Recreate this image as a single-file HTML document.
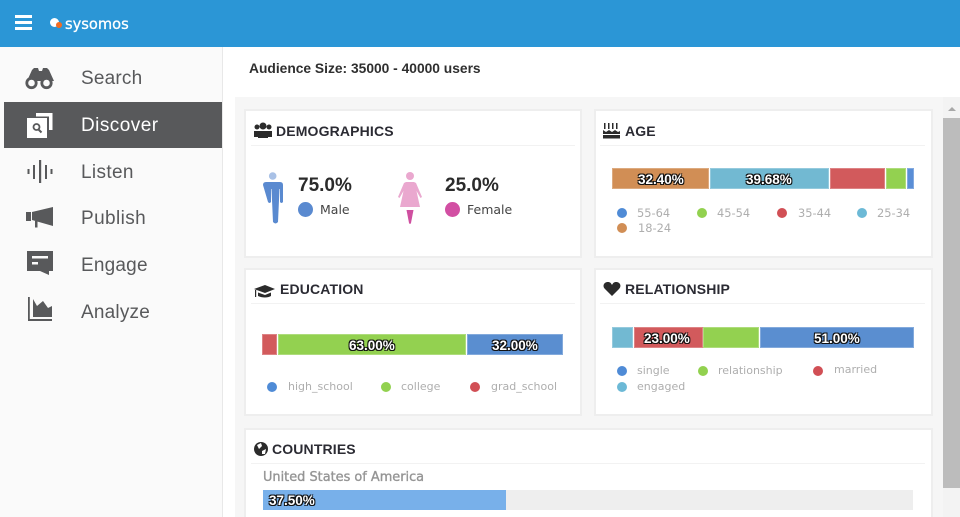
<!DOCTYPE html>
<html><head><meta charset="utf-8"><style>
*{box-sizing:border-box}
html,body{margin:0;padding:0;width:960px;height:517px;overflow:hidden;background:#fff;font-family:"Liberation Sans",sans-serif}
#w{position:relative;width:960px;height:517px;overflow:hidden;background:#fff}
.a{position:absolute}
.nav{position:absolute;left:81px;font-size:19px;color:#58595b;line-height:24px;white-space:nowrap;letter-spacing:.2px}
.card{position:absolute;background:#fff;border:2px solid #eeeeee}
.t{position:absolute;font-weight:bold;font-size:14px;color:#2b2b33;line-height:18px;white-space:nowrap;letter-spacing:.15px}
.hr{position:absolute;height:1px;background:#f2f2f2}
.seg{position:absolute;height:21px;border:1px solid rgba(255,255,255,.25)}
.pct{position:absolute;font-weight:bold;font-size:13.5px;color:#fff;line-height:21px;white-space:nowrap;text-shadow:1px 1px 0 #111,-1px -1px 0 #111,1px -1px 0 #111,-1px 1px 0 #111}
.dot{position:absolute;width:10px;height:10px;border-radius:50%}
.lg{position:absolute;font-family:"DejaVu Sans",sans-serif;font-size:11px;color:#aeaeae;line-height:16px;white-space:nowrap}
.ag{font-size:11.4px}
</style></head><body><div id="w">
<div class="a" style="left:0;top:0;width:960px;height:47px;background:#2b96d6"></div>
<div class="a" style="left:15px;top:15px;width:17px;height:3px;background:#fff"></div>
<div class="a" style="left:15px;top:21px;width:17px;height:3px;background:#fff"></div>
<div class="a" style="left:15px;top:27px;width:17px;height:3px;background:#fff"></div>
<div class="a" style="left:50px;top:18px;width:9px;height:9px;border-radius:50%;background:#fff"></div>
<div class="a" style="left:56px;top:22px;width:6px;height:6px;border-radius:50%;background:#f26b21"></div>
<div class="a" style="left:65px;top:14px;color:#fff;font-size:15.5px;line-height:20px;font-family:'DejaVu Sans',sans-serif;transform-origin:0 0;transform:scaleX(.945);-webkit-text-stroke:.3px #fff">sysomos</div>

<div class="a" style="left:0;top:47px;width:223px;height:470px;background:#fafafa;border-right:1px solid #e8e8e8"></div>
<div class="a" style="left:4px;top:102px;width:218px;height:46px;background:#58595b"></div>

<svg class="a" style="left:0;top:47px" width="80" height="290" viewBox="0 47 80 290">
<g fill="#58595b">
<path d="M27 81l5-11 2-2h4l1 3h3l1-3h4l2 2 5 11z"/>
<circle cx="31.500" cy="83" r="4.700" fill="#fafafa" stroke="#58595b" stroke-width="2.800"/>
<circle cx="46.500" cy="83" r="4.700" fill="#fafafa" stroke="#58595b" stroke-width="2.800"/>
</g>
<path d="M36 113h16.500v17H49v-13.500H36z" fill="#fff"/>
<rect x="27" y="118" width="20" height="20" fill="#fff"/>
<circle cx="36.500" cy="127" r="3" fill="none" stroke="#58595b" stroke-width="1.800"/>
<path d="M38.500 129.500l3 3" stroke="#58595b" stroke-width="2"/>
<g fill="#58595b">
<rect x="27.500" y="169" width="2" height="5"/><rect x="33" y="165" width="2" height="14"/><rect x="39" y="160" width="2.200" height="23"/><rect x="45" y="165" width="2" height="14"/><rect x="50.500" y="169" width="2" height="5"/>
<rect x="26" y="212" width="5" height="9"/>
<path d="M32 212l21-5v19l-21-6z"/><path d="M35 221h2.500v6.500H35z"/>
<path d="M27 251h26v20h-4v4l-9-4H27z"/>
<rect x="32" y="256" width="16" height="2.500" fill="#fafafa"/><rect x="32" y="262" width="6" height="2.500" fill="#fafafa"/>
<path d="M28 297h1.800v22H52v2H28z"/>
<path d="M33 317V299l4 7 6-5 5 7 4-2v11z"/>
</g>
</svg>

<div class="nav" style="top:67px">Search</div>
<div class="nav" style="top:114px;color:#fff;letter-spacing:.45px">Discover</div>
<div class="nav" style="top:161px;letter-spacing:.35px">Listen</div>
<div class="nav" style="top:207px;letter-spacing:.4px">Publish</div>
<div class="nav" style="top:254px">Engage</div>
<div class="nav" style="top:301px">Analyze</div>

<div class="t" style="left:249px;top:60px;font-size:13.8px;color:#2f2f2f;letter-spacing:0">Audience Size: 35000 - 40000 users</div>
<div class="a" style="left:235px;top:97px;width:725px;height:420px;background:#f6f6f6"></div>
<div class="a" style="left:943px;top:97px;width:17px;height:420px;background:#f3f3f3"></div>
<div class="a" style="left:948px;top:107px;width:0;height:0;border-left:4px solid transparent;border-right:4px solid transparent;border-bottom:4px solid #a8a8a8"></div>
<div class="a" style="left:943px;top:118px;width:17px;height:370px;background:#bcbcbc"></div>

<div class="card" style="left:244px;top:109px;width:338px;height:149px"></div>
<div class="card" style="left:594px;top:109px;width:339px;height:149px"></div>
<div class="card" style="left:244px;top:268px;width:338px;height:148px"></div>
<div class="card" style="left:594px;top:268px;width:339px;height:148px"></div>
<div class="card" style="left:244px;top:428px;width:689px;height:110px"></div>

<div class="hr" style="left:251px;top:145px;width:324px"></div>
<div class="hr" style="left:600px;top:145px;width:325px"></div>
<div class="hr" style="left:251px;top:303px;width:324px"></div>
<div class="hr" style="left:600px;top:303px;width:325px"></div>
<div class="hr" style="left:251px;top:463px;width:674px"></div>

<svg class="a" style="left:245px;top:110px" width="690" height="370" viewBox="245 110 690 370">
<g fill="#2b2b2b">
<circle cx="263" cy="126" r="3.500"/><circle cx="257" cy="127" r="2.500"/><circle cx="269" cy="127" r="2.500"/>
<path d="M254 131h5v6h-5zM267 131h5v6h-5z"/><path d="M258 131h10v7h-10z"/>
<rect x="604" y="123" width="1.500" height="6"/><rect x="608" y="123" width="1.500" height="6"/><rect x="612" y="123" width="1.500" height="6"/><rect x="616" y="123" width="1.500" height="6"/>
<path d="M603 130l3 2 3-2 3 2 3-2 3 2 2-1v3h-17v-3z"/><rect x="603" y="135" width="17" height="3.500"/>
<path d="M254 289l11-4 10 4-10 4z"/><path d="M258 292.500l7 2.500 6-2.500v3.500c-3 2-9 2-13 0z"/><rect x="255" y="290" width="1.200" height="7"/>
<path d="M612 296l-7-7c-3-3-1-7 3-7 2 0 3 1 4 3 1-2 2-3 4-3 4 0 6 4 3 7z"/>
</g>
<circle cx="261" cy="449" r="7" fill="#2b2b2b"/>
<path d="M257 445l4-2 1 3-3 3zM262 451l4-2-1 5-3 0z" fill="#fff"/>
<!-- male -->
<circle cx="272.700" cy="176" r="3.800" fill="#a9c1e6"/>
<path d="M263 185q0-3 3-3h14q3 0 3 3v17q-1.500 2-3 0v-13h-.5l-1.500 33q-2.500 3-5 0l-1.500-33h-.5v13q-1.500 2-3 0z" fill="#5a8ad0"/>
<!-- female -->
<circle cx="410" cy="176" r="4" fill="#eaa8cf"/>
<path d="M406 182h8l2 1 6 14-1.500 1-4-7 3.500 16h-20l3.500-16-4 7-1.500-1 6-14z" fill="#eaa8cf"/>
<path d="M406.500 210h7l-2.500 13q-1 2-2 0z" fill="#cf4fa0"/>
</svg>

<div class="t" style="left:276px;top:122px">DEMOGRAPHICS</div>
<div class="t" style="left:625px;top:122px">AGE</div>
<div class="t" style="left:280px;top:280px">EDUCATION</div>
<div class="t" style="left:625px;top:280px">RELATIONSHIP</div>
<div class="t" style="left:272px;top:440px">COUNTRIES</div>

<div class="t" style="left:298px;top:175px;font-size:19px;line-height:22px;color:#2b2b2b;letter-spacing:0">75.0%</div>
<div class="t" style="left:445px;top:175px;font-size:19px;line-height:22px;color:#2b2b2b;letter-spacing:0">25.0%</div>
<div class="dot" style="left:298px;top:202px;width:15px;height:15px;background:#5a8ad0"></div>
<div class="dot" style="left:445px;top:202px;width:15px;height:15px;background:#d24fa3"></div>
<div class="lg" style="left:320px;top:202px;font-size:12.5px;color:#444">Male</div>
<div class="lg" style="left:467px;top:202px;font-size:12.5px;color:#444">Female</div>

<!-- age -->
<div class="seg" style="left:612px;top:168px;width:97px;background:#d18e55"></div>
<div class="seg" style="left:710px;top:168px;width:119px;background:#72b9d2"></div>
<div class="seg" style="left:830px;top:168px;width:55px;background:#d25a5c"></div>
<div class="seg" style="left:886px;top:168px;width:20px;background:#93d150"></div>
<div class="seg" style="left:907px;top:168px;width:7px;background:#5a8ed6"></div>
<div class="pct" style="left:638px;top:169px">32.40%</div>
<div class="pct" style="left:746px;top:169px">39.68%</div>
<div class="dot" style="left:617px;top:208px;background:#4f8bd6"></div><div class="lg ag" style="left:637px;top:205px">55-64</div>
<div class="dot" style="left:697px;top:208px;background:#92d14f"></div><div class="lg ag" style="left:717px;top:205px">45-54</div>
<div class="dot" style="left:777px;top:208px;background:#d14f55"></div><div class="lg ag" style="left:798px;top:205px">35-44</div>
<div class="dot" style="left:857px;top:208px;background:#6cb9d6"></div><div class="lg ag" style="left:877px;top:205px">25-34</div>
<div class="dot" style="left:617px;top:223px;background:#d18e55"></div><div class="lg ag" style="left:638px;top:220px">18-24</div>

<!-- education -->
<div class="seg" style="left:262px;top:334px;width:15px;background:#d25a5c"></div>
<div class="seg" style="left:278px;top:334px;width:188px;background:#93d150"></div>
<div class="seg" style="left:467px;top:334px;width:96px;background:#5a8ed0"></div>
<div class="pct" style="left:349px;top:335px">63.00%</div>
<div class="pct" style="left:492px;top:335px">32.00%</div>
<div class="dot" style="left:267px;top:382px;background:#4f8bd6"></div><div class="lg" style="left:288px;top:379px">high_school</div>
<div class="dot" style="left:381px;top:382px;background:#92d14f"></div><div class="lg" style="left:401px;top:379px">college</div>
<div class="dot" style="left:470px;top:382px;background:#d14f55"></div><div class="lg" style="left:491px;top:379px">grad_school</div>

<!-- relationship -->
<div class="seg" style="left:612px;top:327px;width:21px;background:#72b9d2"></div>
<div class="seg" style="left:634px;top:327px;width:69px;background:#d25a5c"></div>
<div class="seg" style="left:703px;top:327px;width:56px;background:#93d150"></div>
<div class="seg" style="left:760px;top:327px;width:154px;background:#5a8ed0"></div>
<div class="pct" style="left:644px;top:328px">23.00%</div>
<div class="pct" style="left:814px;top:328px">51.00%</div>
<div class="dot" style="left:617px;top:366px;background:#4f8bd6"></div><div class="lg" style="left:637px;top:363px">single</div>
<div class="dot" style="left:698px;top:366px;background:#92d14f"></div><div class="lg" style="left:718px;top:363px">relationship</div>
<div class="dot" style="left:813px;top:366px;background:#d14f55"></div><div class="lg" style="left:834px;top:362px">married</div>
<div class="dot" style="left:617px;top:382px;background:#6cb9d6"></div><div class="lg" style="left:637px;top:379px">engaged</div>

<!-- countries -->
<div class="t" style="left:263px;top:469px;font-family:'DejaVu Sans',sans-serif;font-weight:normal;font-size:12.9px;color:#959595;letter-spacing:0;-webkit-text-stroke:.35px #959595">United States of America</div>
<div class="a" style="left:263px;top:490px;width:650px;height:20px;background:#eeeeee"></div>
<div class="a" style="left:263px;top:490px;width:243px;height:20px;background:#78b0ea"></div>
<div class="pct" style="left:269px;top:491px;line-height:20px">37.50%</div>
</div></body></html>
